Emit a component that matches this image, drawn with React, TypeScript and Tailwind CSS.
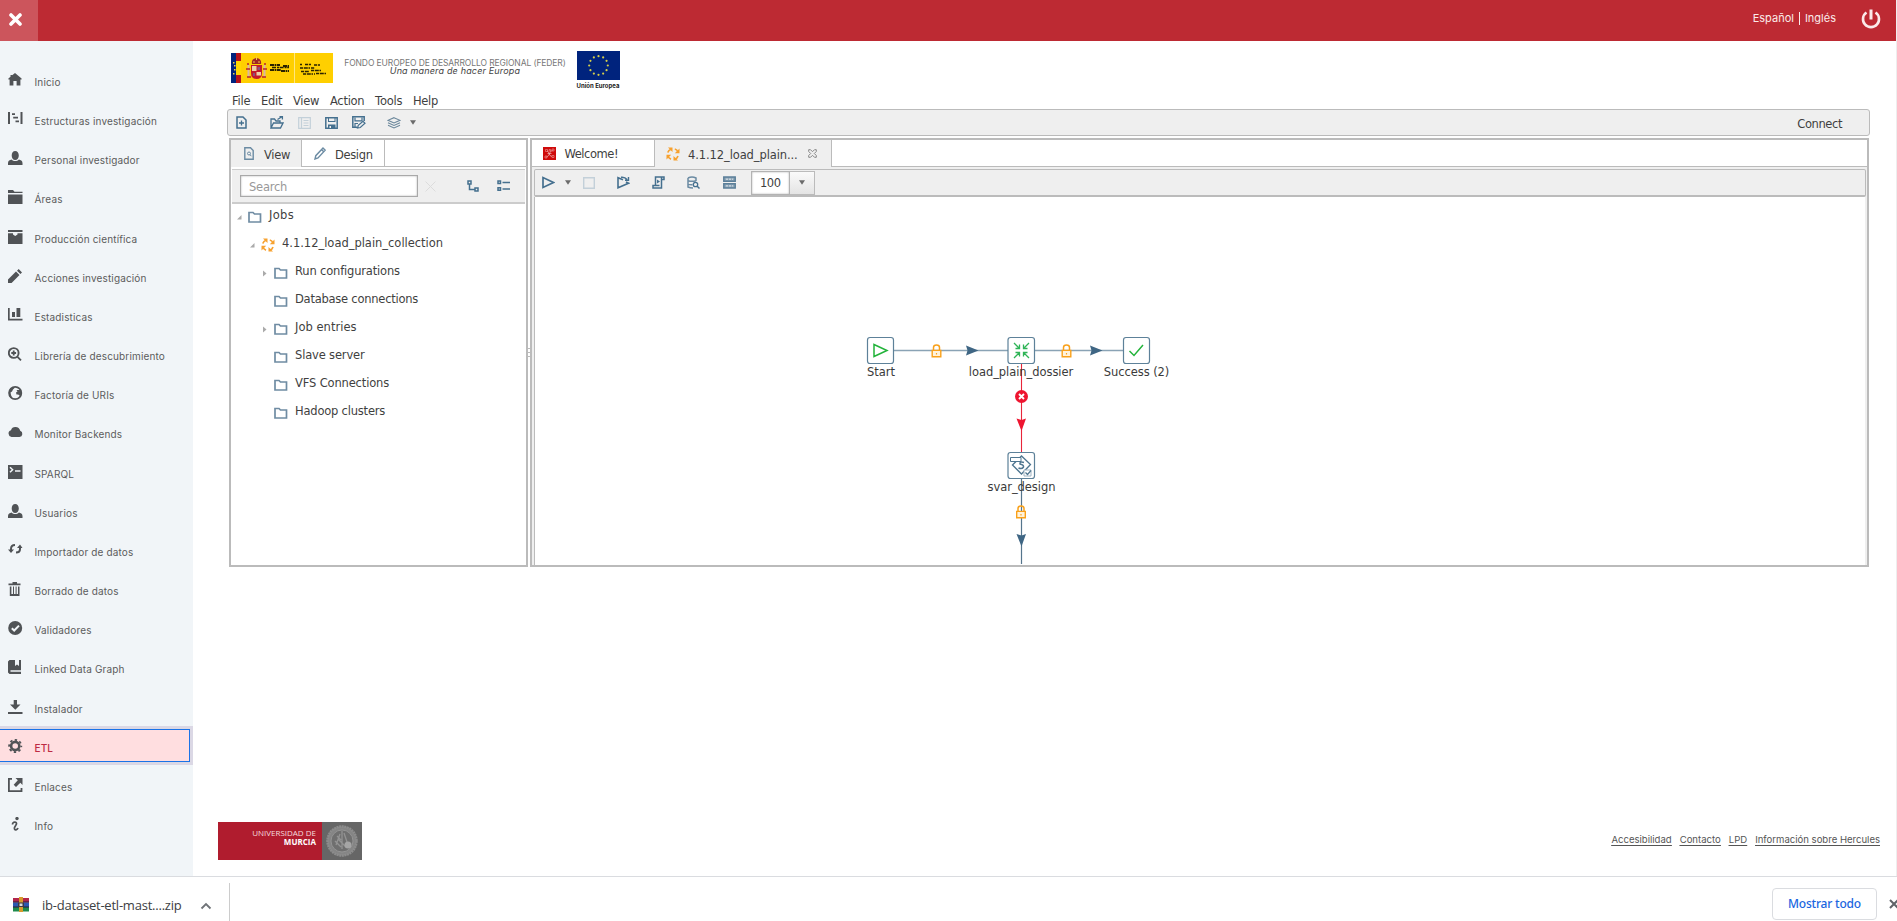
import React from "react";

type IconProps = { w: number; h: number; className?: string; children: React.ReactNode };

function Icon({ w, h, className = "", children }: IconProps) {
  return (
    <svg width={w} height={h} viewBox={`0 0 ${w} ${h}`} fill="none" className={`block shrink-0 ${className}`}>
      {children}
    </svg>
  );
}

const sideIcons: Record<string, React.ReactNode> = {
  home: <path d="M7 0L13.600 5.600V6.500H12.400V12.500H8.600V8H5.400V12.500H1.600V6.500H.4V5.600L2.500 3.800V2H4.200V2.300z" fill="currentColor" />,
  chart: <path d="M0 0H2V12H0zM12.500 0H14.500V12H12.500zM4 1.200H7V2.900H4zM5.200 4.800H10V6.500H5.200zM7.500 8.600H11V10.300H7.500z" fill="currentColor" />,
  user: <path d="M7.200 0C9.400 0 10.800 2 10.800 4.400S9.400 9 7.200 9 3.700 6.800 3.700 4.400 5 0 7.200 0zM0 14V12C0 10 2 9 3.600 8.600 5.500 10.600 9 10.600 10.900 8.600 12.500 9 14.500 10 14.500 12V14z" fill="currentColor" />,
  folder: <path d="M0 0H5L6.500 1.800H14.500V3H0zM0 4.500H14.500V14H0z" fill="currentColor" />,
  box: <path d="M0 0H14.500V2H0zM0 3.300H5V4.500L7.200 6 9.500 4.500V3.300H14.500V14H0z" fill="currentColor" />,
  pencil: <path d="M0 14V10.500L8 2.600 11.500 6 3.600 14zM9 1.700L10.700 0 14 3.400 12.400 5z" fill="currentColor" />,
  bars: <path d="M0 0H1.700V10.800H14.500V12.500H0zM4 4H7V9H4zM8.500 0H12.300V9H8.500z" fill="currentColor" />,
  zoom: (
    <>
      <circle cx="5.700" cy="6" r="4.900" stroke="currentColor" strokeWidth="1.900" />
      <path d="M9.500 9.800L13 13.300M5.700 3.600V8.400M3.300 6H8.100" stroke="currentColor" strokeWidth="1.800" />
    </>
  ),
  globe: (
    <>
      <circle cx="7.200" cy="7" r="6.100" stroke="currentColor" strokeWidth="1.800" />
      <path d="M5 1L6.500 2 5 3.500 4 5.500 2.500 6.500 3 9 4.500 13 1.500 10.500 .8 6 2 3zM8.500 4H11L13 3 13.800 7 12.500 10.500 11 9 10 8.500 8.500 8.500 8 6.500 9.500 5.500z" fill="currentColor" />
    </>
  ),
  cloud: <path d="M3.500 12A3.500 3.500 0 0 1 3 5.200 4.500 4.500 0 0 1 7.500 2 4.800 4.800 0 0 1 12.200 5.800 3.200 3.200 0 0 1 11.500 12z" fill="currentColor" />,
  terminal: (
    <>
      <path d="M0 0H14.500V14H0z" fill="currentColor" />
      <path d="M2 2.200L4.600 4.700 2 7.200M7 6H12.500" stroke="#f1f5f8" strokeWidth="1.500" />
    </>
  ),
  refresh: (
    <>
      <path d="M3 8V6Q3 2 7 2M12 4V6Q12 9.500 8 9.500" stroke="currentColor" strokeWidth="2" />
      <path d="M0 6.500H6L3 10zM9 5H14.500L12 1.500z" fill="currentColor" />
    </>
  ),
  trash: <path d="M.5 1.500H4.500V0H9V1.500H12.500V3.200H.5zM1.800 4.500H3.400V12H5V4.500H6V12H7.600V4.500H8.600V12H10V4.500H11.500V14H1.800z" fill="currentColor" />,
  check: (
    <>
      <circle cx="7.200" cy="7" r="7" fill="currentColor" />
      <path d="M3.800 7.200L6.200 9.500 11 4.600" stroke="#f1f5f8" strokeWidth="2" />
    </>
  ),
  book: <path d="M1.500 0H7V6L9 4.500 11 6V0H13V10.200H2.500V11.700H13V14H1.500L0 12.500V1.500z" fill="currentColor" />,
  download: <path d="M5.700 0H9V4.500H12.500L7.300 9.800 2 4.500H5.700zM0 12H14.500V14H0z" fill="currentColor" />,
  gear: (
    <>
      <circle cx="7.200" cy="7" r="4.100" stroke="currentColor" strokeWidth="2.600" />
      <circle cx="7.200" cy="7" r="6.100" stroke="currentColor" strokeWidth="1.800" strokeDasharray="2.400 2.390" strokeDashoffset="1.200" />
    </>
  ),
  external: (
    <>
      <path d="M4 .8H.9V13.200H13.500V10" stroke="currentColor" strokeWidth="1.800" />
      <path d="M7.500 0H14.500V7L12.300 4.800 8 9 5.700 6.700 9.800 2.300z" fill="currentColor" />
    </>
  ),
  info: (
    <>
      <circle cx="9" cy="1.600" r="1.700" fill="currentColor" />
      <path d="M4.500 7.500Q4.500 5.200 6.800 5.200 9 5.200 8.400 7.200L6.500 10.500Q6 13 8 12.800 9.500 12.500 10 11" stroke="currentColor" strokeWidth="1.700" />
    </>
  ),
};

const nav: [string, string][] = [
  ["home", "Inicio"],
  ["chart", "Estructuras investigación"],
  ["user", "Personal investigador"],
  ["folder", "Áreas"],
  ["box", "Producción científica"],
  ["pencil", "Acciones investigación"],
  ["bars", "Estadisticas"],
  ["zoom", "Librería de descubrimiento"],
  ["globe", "Factoría de URIs"],
  ["cloud", "Monitor Backends"],
  ["terminal", "SPARQL"],
  ["user", "Usuarios"],
  ["refresh", "Importador de datos"],
  ["trash", "Borrado de datos"],
  ["check", "Validadores"],
  ["book", "Linked Data Graph"],
  ["download", "Instalador"],
  ["gear", "ETL"],
  ["external", "Enlaces"],
  ["info", "Info"],
];

function NavItem({ icon, label }: { icon: string; label: string }) {
  const active = label === "ETL";
  return (
    <a className={`flex h-[39.17px] w-[193px] shrink-0 ${active ? "bg-[#dbd8e5] py-[3px] pr-[3px]" : ""}`}>
      <span
        className={`flex w-full items-start pl-2 ${
          active ? "border border-l-0 border-[#1a73e8] bg-[#ffdee0] pt-[9px] font-medium text-[#bd2a43]" : "pt-[13px] text-[#5c5c5c]"
        }`}
      >
        <Icon w={15} h={14} className="text-[#505356]">
          {sideIcons[icon]}
        </Icon>
        <span className="ml-[11.5px] mt-[3px] text-[10px] leading-[12px] tracking-[0.15px]">{label}</span>
      </span>
    </a>
  );
}

function Header() {
  return (
    <header className="flex h-[41px] items-center bg-[#bd2a33] text-white">
      <div className="flex h-full w-[38px] items-start bg-[#cc555c] pl-[9px] pt-[13px]">
        <Icon w={13} h={13}>
          <path d="M2 2L11 11M11 2L2 11" stroke="#fff" strokeWidth="3.600" strokeLinecap="round" />
        </Icon>
      </div>
      <div className="mb-[5px] ml-auto flex items-center text-[11px] text-[#fbeaea]">
        <span>Español</span>
        <span className="mx-[5px] h-[13px] w-px bg-[#fbeaea]" />
        <span>Inglés</span>
      </div>
      <Icon w={20} h={20} className="mb-[4px] ml-[25px] mr-[15px]">
        <path d="M5.500 3.500A8 8 0 1 0 14.500 3.500" stroke="#fbeaea" strokeWidth="2.600" />
        <path d="M10 .5V10.500" stroke="#fbeaea" strokeWidth="3" />
      </Icon>
    </header>
  );
}

function SpainLogo() {
  return (
    <Icon w={102} h={30}>
      <path d="M0 0H102V30H0z" fill="#ffcf00" />
      <path d="M0 0H5V30H0z" fill="#00237d" />
      <path d="M5 0H10V30H5z" fill="#b5121b" />
      <path d="M5 8H10V22H5z" fill="#ffd800" />
      <path d="M2 9h1.500v1.500H2zM3 12h1.500v1.500H3zM3 16h1.500v1.500H3zM2 20h1.500v1.500H2z" fill="#e8d84a" />
      <path d="M20 12H31V20Q31 26 25.500 26 20 26 20 20z" fill="#c41a2b" />
      <path d="M21 13h4.500v5H21zM25.500 19H30v3.500h-4.500z" fill="#ecd0a8" />
      <path d="M26.500 14h2.500v3h-2.500zM22 20h2v3h-2z" fill="#8a4f7a" />
      <path d="M21 11Q20 6 25.500 5 31 6 30 11z" fill="#a02525" />
      <path d="M22.500 8h1v2h-1zM27.500 8h1v2h-1zM25 3.500h1V7h-1z" fill="#f3c74a" />
      <path d="M17.500 12V24M33.500 12V24" stroke="#d9b8a0" strokeWidth="2" />
      <path d="M15 16h4M32 16H36M16 24h4M31 24h4M16 11h2M33 11h2" stroke="#b8232c" strokeWidth="1.300" />
      <path d="M63.500 0V30" stroke="#ffe680" />
      <path d="M39 12H49M52 13H58M39 17H50M50 18H58" stroke="#2a2200" strokeWidth="2" strokeDasharray="4 .6 1.500 .6" />
      <path d="M41 14.500H58" stroke="#2a2200" strokeWidth="1.500" strokeDasharray="4 1 2 .6" />
      <path d="M69 11.500H71M74 11.500H80M83 12H89M69 15H84M70 18.500H78M80 17.500H91M72 21H84M85 20.500H95" stroke="#2a2200" strokeWidth="1.700" strokeDasharray="3 .8 4 .7 1.500 1" />
    </Icon>
  );
}

const starAngles = [0, 30, 60, 90, 120, 150, 180, 210, 240, 270, 300, 330];

function EuLogo() {
  return (
    <div className="flex w-[43px] flex-col items-center">
      <Icon w={43} h={29}>
        <path d="M0 0H43V29H0z" fill="#00237d" />
        {starAngles.map((a) => (
          <circle
            key={a}
            cx={21.5 + 9.3 * Math.cos((a * Math.PI) / 180)}
            cy={14.5 + 9.3 * Math.sin((a * Math.PI) / 180)}
            r="1.100"
            fill="#d6cf4a"
          />
        ))}
      </Icon>
      <span className="mt-[2px] whitespace-nowrap text-[6px] font-bold leading-[8px] text-[#222]">Unión Europea</span>
    </div>
  );
}

const S = "#45708f";

function Folder() {
  return (
    <Icon w={14} h={12}>
      <path d="M1 11V1.500H5L6.500 3H12.500V11z" stroke="#6f8ca3" strokeWidth="1.700" />
    </Icon>
  );
}

function JobIcon() {
  return (
    <Icon w={14} h={14}>
      <path
        d="M1.800 5.500Q2.500 3 5 2.200M8.800 2Q11 2.500 12 5M12 9Q11.200 11.500 9 12M5 12.200Q2.500 11.200 1.800 9"
        stroke="#f7a12f"
        strokeWidth="1.700"
      />
      <path d="M2 .5H6.500V5zM13.500 1.500V6.300H8.800zM12 13.500H7.500V9zM.5 12.500V7.700H5.200z" fill="#f7a12f" />
    </Icon>
  );
}

function Caret({ className = "" }: { className?: string }) {
  return (
    <Icon w={6} h={5} className={className}>
      <path d="M0 .3H6L3 4.800z" fill="#6b6b6b" />
    </Icon>
  );
}

function MainToolbar() {
  return (
    <div className="flex h-[27px] w-[1643px] items-center rounded-[3px] border border-[#bbb] bg-[#efefef]">
      <Icon w={11} h={13} className="ml-[8px]">
        <path d="M1 1H7L10 4V12H1z" stroke={S} strokeWidth="1.500" />
        <path d="M5.500 4.500V9.500M3 7H8" stroke={S} strokeWidth="1.300" />
      </Icon>
      <Icon w={14} h={13} className="ml-[23px]">
        <path d="M1 12V3H4.500L6 5H10V7M1 12L3.500 7H13L10.500 12z" stroke={S} strokeWidth="1.300" />
        <path d="M7.500 3.500L11.500 1M9.500 .6H12.400V3.500" stroke={S} strokeWidth="1.300" />
      </Icon>
      <Icon w={13} h={12} className="ml-[14px]">
        <path d="M.7 .7H12.300V11.300H.7zM3.500 1V11M5.500 3.500H10.500M5.500 6H10.500M5.500 8.500H10.500" stroke="#c3d0d9" strokeWidth="1.200" />
      </Icon>
      <Icon w={13} h={12} className="ml-[14px]">
        <path d="M.8 .8H12.200V11.200H.8z" stroke={S} strokeWidth="1.500" />
        <path d="M3 1H10.500V5H3zM3 7.500H10.500V11H3z" fill={S} />
        <path d="M4 1.500H9.500V4H4zM4.500 9H6V11H4.500z" fill="#efefef" />
      </Icon>
      <Icon w={14} h={13} className="ml-[13.5px]">
        <path d="M5 11.200H.8V.8H12.200V5" stroke={S} strokeWidth="1.500" />
        <path d="M3 1.500V4.800H10V1.500M3 11V7.500H6" stroke={S} strokeWidth="1.200" />
        <path d="M5.500 12L6.300 9.300 11 5.300 13 7.300 8.300 11.500z" stroke={S} strokeWidth="1.200" />
      </Icon>
      <Icon w={14} h={12} className="ml-[21.5px]">
        <path d="M7 .7L13 3.300 7 6 1 3.300zM1 5.700L7 8.400 13 5.700M1 8.300L7 11 13 8.300" stroke="#6b879b" strokeWidth="1.100" />
      </Icon>
      <Caret className="ml-[9px]" />
      <span className="ml-auto mr-[27px] mt-[3px] tracking-[-0.4px]">Connect</span>
    </div>
  );
}

const tree: { label: string; level: number; track: string; arrow?: "open" | "closed"; job?: boolean }[] = [
  { label: "Jobs", level: 0, track: "tracking-[0.3px]", arrow: "open" },
  { label: "4.1.12_load_plain_collection", level: 1, track: "tracking-[-0.02px]", arrow: "open", job: true },
  { label: "Run configurations", level: 2, track: "tracking-[-0.17px]", arrow: "closed" },
  { label: "Database connections", level: 2, track: "tracking-[-0.24px]" },
  { label: "Job entries", level: 2, track: "tracking-[0.03px]", arrow: "closed" },
  { label: "Slave server", level: 2, track: "tracking-[-0.16px]" },
  { label: "VFS Connections", level: 2, track: "tracking-[-0.15px]" },
  { label: "Hadoop clusters", level: 2, track: "tracking-[-0.2px]" },
];
const indent = ["pl-[4px]", "pl-[17px]", "pl-[30px]"];

function LeftPanel() {
  return (
    <section className="flex h-[429px] w-[299px] flex-col border-2 border-[#bbb] bg-white">
      <div className="flex h-[27px] shrink-0">
        <div className="flex w-[70px] items-center bg-[#efefef] pl-[13px]">
          <Icon w={10} h={13}>
            <path d="M.8 .8H6.500L9.200 3.500V12.200H.8z" stroke="#6b8ba3" strokeWidth="1.400" />
            <circle cx="5" cy="6.500" r="1.500" stroke="#6b8ba3" />
            <path d="M6 7.500L7.200 9.200" stroke="#6b8ba3" />
          </Icon>
          <span className="ml-[10px] mt-[2px] tracking-[-0.3px]">View</span>
        </div>
        <div className="flex w-[84px] items-center border-x border-b border-[#bbb] pl-[12px]">
          <Icon w={12} h={13}>
            <path d="M1 12L1.800 8.700 9 1 11.200 3.200 4 11z M7.500 2.500L9.700 4.700" stroke="#6b8ba3" strokeWidth="1.400" />
          </Icon>
          <span className="ml-[9px] mt-[3px] tracking-[-0.35px]">Design</span>
        </div>
        <div className="flex-1 border-b border-[#bbb]" />
      </div>
      <div className="mx-px mt-[2px] flex h-[35px] shrink-0 items-center border-b-2 border-t border-[#ccc] bg-[#efefef]">
        <div className="ml-[8px] flex h-[22px] w-[178px] items-center border border-[#a9a9a9] bg-white pl-[8px] tracking-[-0.25px] text-[#999] shadow-[inset_0_0_2px_#aaa]">
          <span className="mt-[2px]">Search</span>
        </div>
        <Icon w={11} h={11} className="ml-[7px]">
          <path d="M.5 .5L10.500 10.500M10.500 .5L.5 10.500" stroke="#dcdcdc" />
        </Icon>
        <Icon w={12} h={12} className="ml-[31px]">
          <path d="M1 1H4V4H1zM8 8H11V11H8zM2.500 4V9.500H8M2.500 4" stroke={S} strokeWidth="1.500" />
        </Icon>
        <Icon w={13} h={12} className="ml-[18px]">
          <path d="M1 1H3.500V3.500H1zM1 7.800H3.500V10.300H1z" stroke={S} strokeWidth="1.500" />
          <path d="M5.500 2.500H13M5.500 9H13" stroke={S} strokeWidth="1.300" />
        </Icon>
      </div>
      <ul className="flex flex-col">
        {tree.map((t) => (
          <li key={t.label} className={`flex h-[28px] items-center ${indent[t.level]}`}>
            <span className="mb-px flex w-[13px] pl-[1.5px]">
              {t.arrow === "open" && (
                <Icon w={5} h={5}>
                  <path d="M4.500 0V4.500H0z" fill="#aaa" />
                </Icon>
              )}
              {t.arrow === "closed" && (
                <Icon w={4} h={7}>
                  <path d="M0 .5L3.500 3.500 0 6.500z" fill="#aaa" />
                </Icon>
              )}
            </span>
            <span className="mb-[2px]">{t.job ? <JobIcon /> : <Folder />}</span>
            <span className={`mb-[6px] ml-[7px] whitespace-nowrap ${t.track}`}>{t.label}</span>
          </li>
        ))}
      </ul>
    </section>
  );
}

function Lock({ x, y }: { x: number; y: number }) {
  return (
    <g transform={`translate(${x} ${y})`} stroke="#f9a11b">
      <path d="M-3 -1V-3.500Q-3 -6 0 -6 3 -6 3 -3.500V-1" strokeWidth="1.500" fill="none" />
      <path d="M-4.300 -.6H4.300V5.800H-4.300z" strokeWidth="1.400" fill="#fff3dc" />
      <path d="M0 2V3.500" strokeWidth="1.200" />
    </g>
  );
}

function Flow() {
  const node = "#5d8199";
  return (
    <svg width="1331" height="368" viewBox="535 197 1331 368" fill="none" className="block">
      <path d="M893 350.500H1008M1034 350.500H1123" stroke="#8aa3b5" strokeWidth="1.400" />
      <path d="M1021.500 363V452" stroke="#e8253a" strokeWidth="1.100" />
      <path d="M1021.500 479V564" stroke="#55758c" strokeWidth="1.200" />
      <g stroke={node} strokeWidth="1.200" fill="#fff">
        <rect x="867.500" y="337.500" width="26" height="26" rx="2.500" />
        <rect x="1008" y="337.500" width="26.500" height="26" rx="2.500" />
        <rect x="1123.500" y="337.500" width="26" height="26" rx="2.500" />
        <rect x="1008" y="452.500" width="26.500" height="26" rx="2.500" />
      </g>
      <path d="M874 344.500V356.500L887 350.500z" stroke="#22b33a" strokeWidth="1.500" />
      <path
        d="M1014 343L1019.500 348.500M1019.500 344.500V348.500H1015.500M1029 343L1023.500 348.500M1023.500 344.500V348.500H1027.500M1014 358L1019.500 352.500M1019.500 356.500V352.500H1015.500M1029 358L1023.500 352.500M1023.500 356.500V352.500H1027.500"
        stroke="#2fb457"
        strokeWidth="1.300"
      />
      <path d="M1129.500 351L1134 355.500 1143 345" stroke="#22b33a" strokeWidth="1.500" />
      <path d="M1012.500 465L1021.500 456 1030.500 464.500 1021.500 474z" stroke="#4f7690" strokeWidth="1.300" />
      <path d="M1010.500 457.500H1021V461.500H1010.500z" stroke="#4f7690" fill="#fff" />
      <path d="M1024 462.500Q1019.500 461 1020 464 1024 465 1023.500 467 1022 469.500 1018.500 468" stroke="#4f7690" strokeWidth="1.500" />
      <path d="M1024 470H1031V476H1024z" stroke="#9fb3c2" fill="#fff" />
      <path d="M1025.500 472.500L1027.500 474.500 1031 470.500" stroke="#4f7690" strokeWidth="1.200" />
      <Lock x={936.5} y={351} />
      <Lock x={1066.5} y={351} />
      <Lock x={1021} y={512} />
      <path d="M966 345.500L978.500 350.500 966 355.500 967.500 350.500zM1090 345.500L1102.500 350.500 1090 355.500 1091.500 350.500zM1016.500 534L1021.500 546.500 1026 534 1021.500 535.500z" fill="#3f6684" />
      <path d="M1016.500 418.500L1021.500 431 1026 418.500 1021.500 420z" fill="#ee1530" />
      <circle cx="1021.500" cy="396.500" r="6.500" fill="#ee1530" />
      <path d="M1019 394L1024 399M1024 394L1019 399" stroke="#fff" strokeWidth="1.900" />
      <g fill="#3a3a3a" textAnchor="middle" className="text-[11.5px] tracking-[-0.06px]">
        <text x="881" y="376.300">Start</text>
        <text x="1021" y="376.300">load_plain_dossier</text>
        <text x="1136.500" y="376.300">Success (2)</text>
        <text x="1021.500" y="491.300">svar_design</text>
      </g>
    </svg>
  );
}

function RightPanel() {
  return (
    <section className="flex h-[429px] w-[1339px] flex-col border-2 border-[#bbb] bg-[#efefef]">
      <div className="flex h-[27px] shrink-0 bg-white">
        <div className="flex w-[123px] items-center border-b border-r border-[#bbb] pl-[11px]">
          <Icon w={13} h={13}>
            <path d="M0 0H13V13H0z" fill="#cf0a0a" />
            <path d="M4 4Q5.500 4 6 6.500T9 9.500M9.500 3.500Q7 4 6.500 6.500T3.500 10M4.500 6.500H8.500" stroke="#f8d0d0" strokeWidth=".6" />
            <path d="M2.500 2.500h2v2h-2zM9 2h2v2H9zM2 9h2v2H2zM9 8.500h2v2H9zM6 2.500h1.500V4H6z" stroke="#f3b5b5" strokeWidth=".5" />
          </Icon>
          <span className="ml-[8.5px] mt-[2px] tracking-[-0.45px]">Welcome!</span>
        </div>
        <div className="flex w-[177px] items-center border-r border-[#bbb] bg-[#efefef] pl-[11px]">
          <JobIcon />
          <span className="ml-[8px] mt-[2px] tracking-[-0.1px]">4.1.12_load_plain...</span>
          <Icon w={9} h={9} className="ml-[10.5px]">
            <path d="M.7 .7H2.500L4.500 2.700 6.500 .7H8.300V2.500L6.300 4.500 8.300 6.500V8.300H6.500L4.500 6.300 2.500 8.300H.7V6.500L2.700 4.500 .7 2.500z" stroke="#888" />
          </Icon>
        </div>
        <div className="flex-1 border-b border-[#bbb]" />
      </div>
      <div className="ml-[2px] mr-px mt-[2px] flex h-[28px] shrink-0 items-center rounded-[2px] border border-b-2 border-[#bbb] bg-[#efefef] pl-[7px]">
        <Icon w={13} h={13}>
          <path d="M1 1.500V11.500L11.500 6.500z" stroke={S} strokeWidth="1.700" />
        </Icon>
        <Caret className="ml-[9.5px]" />
        <Icon w={12} h={12} className="ml-[12.5px]">
          <path d="M.7 .7H11.300V11.300H.7z" stroke="#c3d0d9" strokeWidth="1.400" />
        </Icon>
        <Icon w={13} h={13} className="ml-[22px]">
          <path d="M6 3.800L1 1.800V11.800L11.500 7.200 9 6" stroke={S} strokeWidth="1.600" />
          <path d="M4 1.300Q8 .8 10 3.500M11.500 1V4.300H8" stroke={S} strokeWidth="1.400" />
        </Icon>
        <Icon w={13} h={13} className="ml-[22px]">
          <path d="M3.500 9V1H12V3.500H9.500V12H1V9.500H7.500M9.500 1.500V4" stroke={S} strokeWidth="1.500" />
          <path d="M5 3.500L8 5.500 5 7.500z" fill={S} />
        </Icon>
        <Icon w={13} h={13} className="ml-[22px]">
          <path d="M1 2Q5 0 9 2V5M1 2V11Q3 12 6 12M1 4.700Q5 6 9 4.700M1 8.400Q3 9 5.500 8.800" stroke="#6b8ba3" strokeWidth="1.500" />
          <circle cx="8.500" cy="8.500" r="2.200" stroke={S} strokeWidth="1.300" />
          <path d="M10 10L12.500 12.500" stroke={S} strokeWidth="1.500" />
        </Icon>
        <Icon w={13} h={13} className="ml-[23px]">
          <path d="M.8 1H12.200V5.300H.8zM.8 7.700H12.200V12H.8z" stroke="#5b7f99" strokeWidth="1.500" fill="#8fa7b8" />
          <path d="M3 3.200H10M3 9.900H10" stroke="#dfe5ea" strokeDasharray="2 1" />
        </Icon>
        <div className="ml-[15px] flex h-[24px] w-[39px] items-center border border-[#b3b3b3] bg-white pl-[8px] tracking-[-0.5px] shadow-[inset_0_0_2px_#aaa]">
          <span className="mt-px">100</span>
        </div>
        <div className="flex h-[24px] w-[25px] items-center justify-center border border-l-0 border-[#bbb] bg-gradient-to-b from-[#fafafa] to-[#e4e4e4]">
          <Caret />
        </div>
      </div>
      <div className="mx-[2px] min-h-0 flex-1 overflow-hidden border-l border-[#bbb] bg-white">
        <Flow />
      </div>
    </section>
  );
}

function Footer() {
  return (
    <footer className="ml-[25px] mt-[255px] flex h-[38px] items-start">
      <div className="flex h-[38px] w-[104px] flex-col bg-[#b01c2e] pr-[6px] pt-[6px] text-right font-['Open_Sans',sans-serif] text-[8px] leading-[9px] text-[#f6dcdf]">
        <span>UNIVERSIDAD DE</span>
        <span className="font-bold text-white">MURCIA</span>
      </div>
      <div className="flex h-[38px] w-[40px] items-center justify-center bg-[#666]">
        <Icon w={32} h={32}>
          <circle cx="16" cy="16" r="14.500" stroke="#8c8c8c" strokeWidth="2.500" fill="#858585" strokeDasharray="2 .6" />
          <circle cx="16" cy="16" r="11" stroke="#949494" fill="#6f6f6f" />
          <path d="M10 20L14 9M18 8L22 20M12 14L20 22M16 6V24M9 16L15 22M11 11L15 15" stroke="#939393" strokeWidth="1.300" />
          <circle cx="22" cy="20" r="3.500" fill="#a5a5a5" />
        </Icon>
      </div>
      <div className="ml-auto mr-[16px] mt-[11px] flex gap-[8px] text-[9.55px] leading-[14px] text-[#555] underline underline-offset-[1.5px]">
        <a>Accesibilidad</a>
        <a>Contacto</a>
        <a>LPD</a>
        <a>Información sobre Hercules</a>
      </div>
    </footer>
  );
}

function DownloadBar() {
  return (
    <div className="flex h-[45px] w-full items-center overflow-hidden border-t border-[#dadce0] bg-white">
      <Icon w={16} h={15} className="ml-[13px] mt-[11px]">
        <path d="M0 1H16V5.500H0z" fill="#b3264a" />
        <path d="M0 5.500H16V10H0z" fill="#2c59b0" />
        <path d="M0 10H16V14.500H0z" fill="#1f8a4c" />
        <path d="M0 5H16M0 10H16" stroke="#2b1a3a" />
        <path d="M6 0H10V15H6z" fill="#d79a2b" />
        <path d="M5 5.500H11V10H5z" fill="#3a3a48" />
        <path d="M6.500 6.500H9.500V9H6.500z" fill="#ddd" />
      </Icon>
      <span className="ml-[13px] mt-[13px] w-[158px] font-['Open_Sans',sans-serif] text-[13px] tracking-[-0.22px] text-[#3c4043]">
        ib-dataset-etl-mast....zip
      </span>
      <Icon w={12} h={8} className="mt-[13px]">
        <path d="M1.500 6.500L6 2 10.500 6.500" stroke="#6f7377" strokeWidth="1.800" />
      </Icon>
      <span className="ml-[17px] mt-[6px] h-[39px] w-px bg-[#ccc]" />
      <span className="ml-auto mr-[12px] mt-[11px] flex h-[32px] w-[105px] shrink-0 items-center justify-center self-start rounded-[4px] border border-[#dadce0] font-['Noto_Sans',sans-serif] text-[12px] font-medium tracking-[-0.2px] text-[#1a66e0]">
        Mostrar todo
      </span>
      <Icon w={8} h={10} className="mt-[10px]">
        <path d="M1 1L9 9M9 1L1 9" stroke="#5f6368" strokeWidth="2" />
      </Icon>
    </div>
  );
}

export default function App() {
  return (
    <div className="flex h-[921px] w-[1897px] flex-col overflow-hidden bg-white font-['Inter',sans-serif]">
      <div className="flex h-[876px] shrink-0 flex-col border-r border-[#eee]">
        <Header />
        <div className="flex min-h-0 flex-1">
          <nav className="flex w-[193px] shrink-0 flex-col bg-[#f1f5f8] pt-[19px]">
            {nav.map(([icon, label]) => (
              <NavItem key={label} icon={icon} label={label} />
            ))}
          </nav>
          <main className="flex min-w-0 flex-1 flex-col">
            <div className="ml-[38px] mt-[10px] flex h-[40px] items-start">
              <div className="mt-[2px]">
                <SpainLogo />
              </div>
              <div className="ml-[11.5px] mt-[7.5px] flex w-[221px] flex-col items-center whitespace-nowrap leading-[8px]">
                <span className="text-[8.5px] tracking-[-0.1px] text-[#777]">FONDO EUROPEO DE DESARROLLO REGIONAL (FEDER)</span>
                <span className="text-[9px] italic tracking-[0.17px] text-[#444]">Una manera de hacer Europa</span>
              </div>
              <div className="ml-[11px]">
                <EuLogo />
              </div>
            </div>
            <div className="ml-[34px] flex flex-col font-['DejaVu_Sans',sans-serif] text-[11.5px] leading-[18px] text-[#3f3f3f]">
              <div className="flex h-[18px] items-center gap-[10.7px] pl-[5px] pt-px tracking-[-0.25px]">
                <span>File</span>
                <span>Edit</span>
                <span>View</span>
                <span>Action</span>
                <span>Tools</span>
                <span>Help</span>
              </div>
              <MainToolbar />
              <div className="ml-[2px] mt-[2px] flex">
                <LeftPanel />
                <div className="flex w-[2px] flex-col items-center justify-center gap-[3px]">
                  <span className="h-px w-[2px] bg-[#bbb]" />
                  <span className="h-px w-[2px] bg-[#bbb]" />
                  <span className="h-px w-[2px] bg-[#bbb]" />
                </div>
                <RightPanel />
              </div>
            </div>
            <Footer />
          </main>
        </div>
      </div>
      <DownloadBar />
    </div>
  );
}
